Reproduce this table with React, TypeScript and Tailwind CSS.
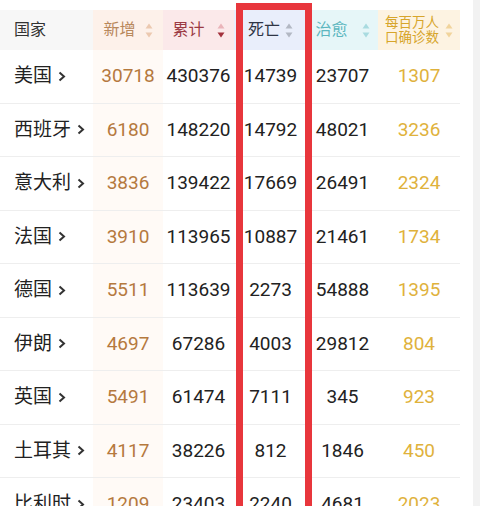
import React from 'react'

/* ── Data ── */
interface Row {
  name: string
  added: string
  total: string
  dead: string
  cured: string
  perMillion: string
}

const rows: Row[] = [
  { name: '美国', added: '30718', total: '430376', dead: '14739', cured: '23707', perMillion: '1307' },
  { name: '西班牙', added: '6180', total: '148220', dead: '14792', cured: '48021', perMillion: '3236' },
  { name: '意大利', added: '3836', total: '139422', dead: '17669', cured: '26491', perMillion: '2324' },
  { name: '法国', added: '3910', total: '113965', dead: '10887', cured: '21461', perMillion: '1734' },
  { name: '德国', added: '5511', total: '113639', dead: '2273', cured: '54888', perMillion: '1395' },
  { name: '伊朗', added: '4697', total: '67286', dead: '4003', cured: '29812', perMillion: '804' },
  { name: '英国', added: '5491', total: '61474', dead: '7111', cured: '345', perMillion: '923' },
  { name: '土耳其', added: '4117', total: '38226', dead: '812', cured: '1846', perMillion: '450' },
  { name: '比利时', added: '1209', total: '23403', dead: '2240', cured: '4681', perMillion: '2023' },
]

const FONT = { fontFamily: 'Roboto, "Noto Sans CJK SC", sans-serif' }

/* small stacked up/down triangles */
function SortIcon({ up, down }: { up: string; down: string }) {
  return (
    <svg width="8" height="15" viewBox="0 0 8 15" className="shrink-0">
      <polygon points="4,0.5 7.5,5.5 0.5,5.5" fill={up} />
      <polygon points="0.5,9.5 7.5,9.5 4,14.5" fill={down} />
    </svg>
  )
}

function Chevron() {
  return (
    <svg width="8" height="11" viewBox="0 0 8 11" className="shrink-0">
      <polyline points="1.5,1.5 6,5.5 1.5,9.5" fill="none" stroke="#333" strokeWidth="2" />
    </svg>
  )
}

export default function App() {
  return (
    <div className="relative h-[506px] w-[480px] overflow-hidden bg-white" style={FONT}>
      <div className="flex h-full">
        <div className="w-[460px] pt-[10px]">
          {/* Header */}
          <div className="flex h-[40px]">
            <div className="flex w-[93px] items-center bg-[#f7f7f7] pl-[14px] text-[16px] text-[#333]">
              国家
            </div>
            <div className="flex w-[70px] items-center justify-center gap-[9px] bg-[#fdf1ea] text-[16px] text-[#b8885c]">
              新增
              <SortIcon up="#ecc9b0" down="#ecc9b0" />
            </div>
            <div className="flex w-[71px] items-center justify-center gap-[12px] bg-[#fbe9ea] text-[16px] text-[#9c3a44]">
              累计
              <SortIcon up="#eab4b9" down="#a3323d" />
            </div>
            <div className="flex w-[73px] items-center justify-center gap-[5px] bg-[#e9eefb] text-[16px] text-[#2f3545]">
              死亡
              <SortIcon up="#b3b8c4" down="#b3b8c4" />
            </div>
            <div className="flex w-[71px] items-center justify-center gap-[14px] bg-[#e6f6f8] text-[16px] text-[#5cb6bf]">
              治愈
              <SortIcon up="#a9dbe0" down="#a9dbe0" />
            </div>
            <div className="flex w-[82px] items-center justify-center gap-[6px] bg-[#fdf3e2] text-[13.5px] leading-[15px] text-[#d7a52b]">
              <span>
                每百万人
                <br />
                口确诊数
              </span>
              <SortIcon up="#f1d49c" down="#f1d49c" />
            </div>
          </div>

          {/* Rows */}
          {rows.map((r) => (
            <div key={r.name} className="flex h-[53.5px] border-b border-[#eeeeee] text-[19px]">
              <div className="flex w-[93px] items-center gap-[6px] pl-[14px] text-[#222]">
                {r.name}
                <Chevron />
              </div>
              <div className="flex w-[70px] items-center justify-center bg-[#fffaf6] text-[#b5793e]">
                {r.added}
              </div>
              <div className="flex w-[71px] items-center justify-center text-[#222]">{r.total}</div>
              <div className="flex w-[73px] items-center justify-center text-[#222]">{r.dead}</div>
              <div className="flex w-[71px] items-center justify-center text-[#222]">{r.cured}</div>
              <div className="flex w-[82px] items-center justify-center text-[#dfb23c]">
                {r.perMillion}
              </div>
            </div>
          ))}
        </div>
        <div className="flex-1" />
        <div className="w-[7px] bg-[#f2f2f2]" />
      </div>

      {/* Red highlight box over the 死亡 column */}
      <div className="pointer-events-none absolute left-[236px] top-[3px] h-[600px] w-[76px] border-[7px] border-[#e8363c]" />
    </div>
  )
}
